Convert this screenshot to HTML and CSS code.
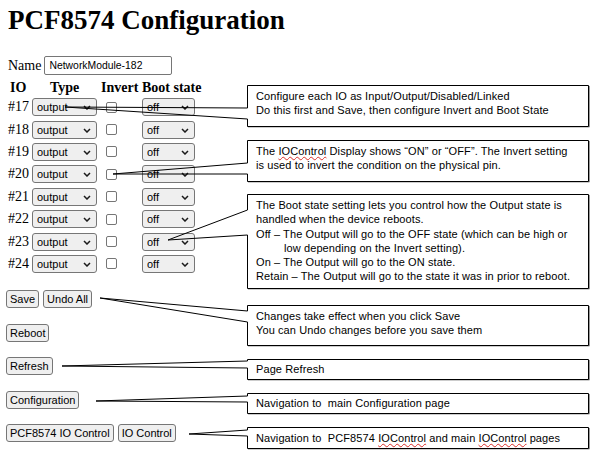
FILE: index.html
```html
<!DOCTYPE html>
<html lang="en">
<head>
<meta charset="utf-8">
<title>PCF8574 Configuration</title>
<link rel="stylesheet" href="styles.css">
</head>
<body>
<main class="page">
  <h1 class="title">PCF8574 Configuration</h1>
  <div class="name-row">
    <label class="name-label" for="devname">Name</label>
    <input class="name-input" id="devname" type="text" value="NetworkModule-182">
  </div>
  <table class="io-table">
    <thead>
      <tr><th class="c-io">IO</th><th class="c-type">Type</th><th class="c-inv">Invert</th><th class="c-boot">Boot state</th></tr>
    </thead>
    <tbody>
      <tr><td class="c-io">#17</td><td class="c-type"><span class="sel sel-type"><select><option>output</option></select><svg class="chev" viewBox="0 0 8 5"><path d="M1 1 L4 4 L7 1"/></svg></span></td><td class="c-inv"><input class="chk" type="checkbox"></td><td class="c-boot"><span class="sel sel-boot"><select><option>off</option></select><svg class="chev" viewBox="0 0 8 5"><path d="M1 1 L4 4 L7 1"/></svg></span></td></tr>
      <tr><td class="c-io">#18</td><td class="c-type"><span class="sel sel-type"><select><option>output</option></select><svg class="chev" viewBox="0 0 8 5"><path d="M1 1 L4 4 L7 1"/></svg></span></td><td class="c-inv"><input class="chk" type="checkbox"></td><td class="c-boot"><span class="sel sel-boot"><select><option>off</option></select><svg class="chev" viewBox="0 0 8 5"><path d="M1 1 L4 4 L7 1"/></svg></span></td></tr>
      <tr><td class="c-io">#19</td><td class="c-type"><span class="sel sel-type"><select><option>output</option></select><svg class="chev" viewBox="0 0 8 5"><path d="M1 1 L4 4 L7 1"/></svg></span></td><td class="c-inv"><input class="chk" type="checkbox"></td><td class="c-boot"><span class="sel sel-boot"><select><option>off</option></select><svg class="chev" viewBox="0 0 8 5"><path d="M1 1 L4 4 L7 1"/></svg></span></td></tr>
      <tr><td class="c-io">#20</td><td class="c-type"><span class="sel sel-type"><select><option>output</option></select><svg class="chev" viewBox="0 0 8 5"><path d="M1 1 L4 4 L7 1"/></svg></span></td><td class="c-inv"><input class="chk" type="checkbox"></td><td class="c-boot"><span class="sel sel-boot"><select><option>off</option></select><svg class="chev" viewBox="0 0 8 5"><path d="M1 1 L4 4 L7 1"/></svg></span></td></tr>
      <tr><td class="c-io">#21</td><td class="c-type"><span class="sel sel-type"><select><option>output</option></select><svg class="chev" viewBox="0 0 8 5"><path d="M1 1 L4 4 L7 1"/></svg></span></td><td class="c-inv"><input class="chk" type="checkbox"></td><td class="c-boot"><span class="sel sel-boot"><select><option>off</option></select><svg class="chev" viewBox="0 0 8 5"><path d="M1 1 L4 4 L7 1"/></svg></span></td></tr>
      <tr><td class="c-io">#22</td><td class="c-type"><span class="sel sel-type"><select><option>output</option></select><svg class="chev" viewBox="0 0 8 5"><path d="M1 1 L4 4 L7 1"/></svg></span></td><td class="c-inv"><input class="chk" type="checkbox"></td><td class="c-boot"><span class="sel sel-boot"><select><option>off</option></select><svg class="chev" viewBox="0 0 8 5"><path d="M1 1 L4 4 L7 1"/></svg></span></td></tr>
      <tr><td class="c-io">#23</td><td class="c-type"><span class="sel sel-type"><select><option>output</option></select><svg class="chev" viewBox="0 0 8 5"><path d="M1 1 L4 4 L7 1"/></svg></span></td><td class="c-inv"><input class="chk" type="checkbox"></td><td class="c-boot"><span class="sel sel-boot"><select><option>off</option></select><svg class="chev" viewBox="0 0 8 5"><path d="M1 1 L4 4 L7 1"/></svg></span></td></tr>
      <tr><td class="c-io">#24</td><td class="c-type"><span class="sel sel-type"><select><option>output</option></select><svg class="chev" viewBox="0 0 8 5"><path d="M1 1 L4 4 L7 1"/></svg></span></td><td class="c-inv"><input class="chk" type="checkbox"></td><td class="c-boot"><span class="sel sel-boot"><select><option>off</option></select><svg class="chev" viewBox="0 0 8 5"><path d="M1 1 L4 4 L7 1"/></svg></span></td></tr>
    </tbody>
  </table>
  <div class="actions">
    <div class="btn-row"><button class="btn" type="button">Save</button><button class="btn" type="button">Undo All</button></div>
    <div class="btn-row"><button class="btn" type="button">Reboot</button></div>
    <div class="btn-row"><button class="btn" type="button">Refresh</button></div>
    <div class="btn-row"><button class="btn" type="button">Configuration</button></div>
    <div class="btn-row"><button class="btn" type="button">PCF8574 IO Control</button><button class="btn" type="button">IO Control</button></div>
  </div>
</main>

<svg class="callout-lines" viewBox="0 0 598 461" aria-hidden="true">
  <g class="shadow">
    <path d="M589.5 86 V127 H248"/>
    <path d="M589.5 141 V182 H248"/>
    <path d="M589.5 195 V289 H248"/>
    <path d="M589.5 306 V346 H248"/>
    <path d="M589.5 360 V380 H248"/>
    <path d="M589.5 394 V414 H248"/>
    <path d="M589.5 428 V449 H248"/>
  </g>
  <g class="outline">
    <path d="M247.5 85.5 H588.5 V126.5 H247.5 V119 L65 107 L247.5 108 Z"/>
    <path d="M247.5 140.5 H588.5 V181.5 H247.5 V174 L113 174 L247.5 163 Z"/>
    <path d="M247.5 194.5 H588.5 V288.5 H247.5 V235 L168 240 L247.5 210 Z"/>
    <path d="M247.5 305.5 H588.5 V345.5 H247.5 V322 L100 298 L247.5 311 Z"/>
    <path d="M247.5 359.5 H588.5 V379.5 H247.5 V368 L62 366 L247.5 361 Z"/>
    <path d="M247.5 393.5 H588.5 V413.5 H247.5 V402 L96 401 L247.5 396 Z"/>
    <path d="M247.5 427.5 H588.5 V448.5 H247.5 V436 L189 434 L247.5 430 Z"/>
  </g>
</svg>

<div class="notes">
  <div class="note note-1">
    <p>Configure each IO as Input/Output/Disabled/Linked</p>
    <p>Do this first and Save, then configure Invert and Boot State</p>
  </div>
  <div class="note note-2">
    <p>The <span class="spell">IOControl</span> Display shows “ON” or “OFF”. The Invert setting is used to invert the condition on the physical pin.</p>
  </div>
  <div class="note note-3">
    <p>The Boot state setting lets you control how the Output state is handled when the device reboots.</p>
    <p class="hang">Off – The Output will go to the OFF state (which can be high or low depending on the Invert setting).</p>
    <p>On – The Output will go to the ON state.</p>
    <p>Retain – The Output will go to the state it was in prior to reboot.</p>
  </div>
  <div class="note note-4">
    <p>Changes take effect when you click Save</p>
    <p>You can Undo changes before you save them</p>
  </div>
  <div class="note note-5">
    <p>Page Refresh</p>
  </div>
  <div class="note note-6">
    <p>Navigation to&nbsp; main Configuration page</p>
  </div>
  <div class="note note-7">
    <p>Navigation to&nbsp; PCF8574 <span class="spell">IOControl</span> and main <span class="spell">IOControl</span> pages</p>
  </div>
</div>
</body>
</html>
```

FILE: styles.css
```css
* { box-sizing: border-box; }

html, body {
  margin: 0;
  padding: 0;
  background: #ffffff;
}

body {
  position: relative;
  width: 598px;
  height: 461px;
  overflow: hidden;
  font-family: "Liberation Serif", "Times New Roman", serif;
  font-size: 14px;
  color: #000;
}

.page {
  padding: 4px 8px 0 8px;
}

.title {
  margin: 0;
  font-size: 27px;
  line-height: 32px;
  font-weight: bold;
}

.name-row {
  display: flex;
  align-items: center;
  height: 19px;
  margin-top: 20px;
}

.name-label {
  margin-right: 2px;
}

.name-input {
  width: 128px;
  height: 19px;
  margin: 0 0 0 1px;
  padding: 0 4px;
  border: 1px solid #767676;
  border-radius: 2px;
  font-family: "Liberation Sans", Arial, sans-serif;
  font-size: 10.4px;
  color: #000;
  background: #fff;
}

.io-table {
  margin-top: 5px;
  border-collapse: separate;
  border-spacing: 0;
}

.io-table th {
  height: 16px;
  padding: 0;
  text-align: left;
  font-weight: bold;
  font-size: 14px;
  line-height: 16px;
  white-space: nowrap;
}

.io-table td {
  height: 22.4px;
  padding: 0;
  vertical-align: middle;
  white-space: nowrap;
}

.io-table .c-io { width: 24px; }
.io-table th.c-io { padding-left: 2px; }
.io-table .c-type { width: 69px; }
.io-table th.c-type { padding-left: 18px; }
.io-table .c-inv { width: 41px; }
.io-table .c-boot { width: 60px; }

.sel {
  position: relative;
  display: inline-block;
  vertical-align: middle;
  height: 18px;
}

.sel select {
  appearance: none;
  -webkit-appearance: none;
  display: block;
  height: 18px;
  margin: 0;
  padding: 0 0 0 4px;
  border: 1px solid #767676;
  border-radius: 3px;
  background: #efefef;
  font-family: "Liberation Sans", Arial, sans-serif;
  font-size: 11px;
  line-height: 16px;
  color: #000;
}

.sel-type select { width: 65px; }
.sel-boot select { width: 53px; }

.chev {
  position: absolute;
  right: 6px;
  top: 7px;
  width: 8px;
  height: 5px;
  pointer-events: none;
}

.chev path {
  fill: none;
  stroke: #1a1a1a;
  stroke-width: 1.5;
}

.chk {
  appearance: none;
  -webkit-appearance: none;
  display: block;
  width: 11px;
  height: 11px;
  margin: 0 0 0 5px;
  border: 1px solid #767676;
  border-radius: 2px;
  background: #fff;
}

.actions {
  display: flex;
  flex-direction: column;
  gap: 15.5px;
  margin-top: 15px;
  margin-left: -2px;
}

.btn-row {
  display: flex;
  gap: 4px;
}

.btn {
  height: 18px;
  margin: 0;
  padding: 0 3px;
  border: 1px solid #767676;
  border-radius: 3px;
  background: #efefef;
  font-family: "Liberation Sans", Arial, sans-serif;
  font-size: 11px;
  line-height: 16px;
  color: #000;
  white-space: nowrap;
}

/* callout annotation overlay */
.callout-lines {
  position: absolute;
  left: 0;
  top: 0;
  width: 598px;
  height: 461px;
  pointer-events: none;
}

.callout-lines .outline path {
  fill: none;
  stroke: #000;
  stroke-width: 1;
}

.callout-lines .shadow path {
  fill: none;
  stroke: #9a9a9a;
  stroke-width: 1;
}

.notes {
  position: absolute;
  left: 247px;
  top: 85px;
  width: 342px;
  display: flex;
  flex-direction: column;
  font-family: "Liberation Sans", Arial, sans-serif;
  font-size: 11px;
  line-height: 14.3px;
  color: #000;
}

.note {
  padding: 4px 14px 0 9px;
  letter-spacing: 0.1px;
}

.note p { margin: 0; }

.note .hang {
  padding-left: 28px;
  text-indent: -28px;
}

.spell {
  text-decoration: underline wavy #d9302c;
  text-decoration-thickness: 1px;
  text-underline-offset: 1px;
}

.note-1 { height: 41px; }
.note-2 { height: 41px; margin-top: 14px; }
.note-3 { height: 94px; margin-top: 13px; }
.note-4 { height: 40px; margin-top: 17px; }
.note-5 { height: 20px; margin-top: 14px; padding-top: 3px; }
.note-6 { height: 20px; margin-top: 14px; padding-top: 3px; }
.note-7 { height: 21px; margin-top: 14px; padding-top: 4px; }
```
